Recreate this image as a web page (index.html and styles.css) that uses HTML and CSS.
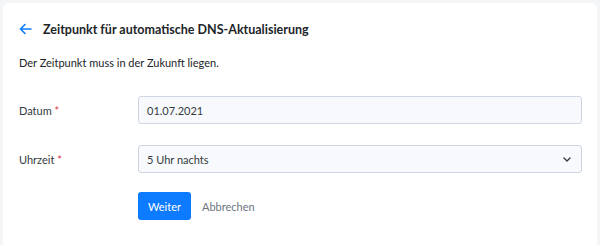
FILE: index.html
```html
<!DOCTYPE html>
<html lang="de">
<head>
  <meta charset="UTF-8">
  <title>Zeitpunkt</title>
  <link rel="stylesheet" href="styles.css">
</head>
<body>
  <div class="card">
    <div class="card-header">
      <a class="back" href="#">
        <svg width="13" height="12" viewBox="0 0 13 12" fill="none" stroke="#0d7bff" stroke-width="1.6" stroke-linecap="round" stroke-linejoin="round">
          <path d="M12 6H1.5M6 1.5L1.5 6L6 10.5"/>
        </svg>
      </a>
      <h1>Zeitpunkt für automatische DNS-Aktualisierung</h1>
    </div>
    <p class="hint">Der Zeitpunkt muss in der Zukunft liegen.</p>

    <div class="form">
      <div class="row">
        <label>Datum <span class="req">*</span></label>
        <div class="field">01.07.2021</div>
      </div>
      <div class="row">
        <label>Uhrzeit <span class="req">*</span></label>
        <div class="field select">
          <span>5 Uhr nachts</span>
          <svg width="8" height="5" viewBox="0 0 8 5" fill="none" stroke="#343a40" stroke-width="1.4" stroke-linecap="round" stroke-linejoin="round">
            <path d="M1 1l3 3 3-3"/>
          </svg>
        </div>
      </div>
      <div class="actions">
        <button class="btn-primary">Weiter</button>
        <a class="btn-link" href="#">Abbrechen</a>
      </div>
    </div>
  </div>
</body>
</html>
```

FILE: styles.css
```css
body {
  margin: 0;
  padding: 3px 3px 0 3px;
  background: #f4f5f7;
  font-family: 'Lato', 'Noto Sans', sans-serif;
  font-size: 11px;
  color: #212529;
}

.card {
  background: #ffffff;
  border-radius: 6px 6px 0 0;
  padding: 16px 15px 0 16px;
  height: 242px;
  box-sizing: border-box;
}

.card-header {
  display: flex;
  align-items: center;
  gap: 11px;
  height: 20px;
}

.back {
  display: flex;
  align-items: center;
}

h1 {
  margin: 0;
  font-size: 12.5px;
  font-weight: 700;
  color: #212529;
}

.hint {
  margin: 15px 0 0 0;
  line-height: 18px;
  color: #212529;
}

.form {
  margin-top: 24px;
  display: flex;
  flex-direction: column;
  gap: 21px;
}

.row {
  display: flex;
  align-items: center;
}

.row label {
  width: 119px;
  color: #343a40;
}

.req {
  color: #dc3545;
}

.field {
  flex: 1;
  height: 28px;
  box-sizing: border-box;
  border: 1px solid #cdd5e2;
  border-radius: 3px;
  background: #f7f9fc;
  padding: 0 8px;
  display: flex;
  align-items: center;
  color: #343a40;
}

.select {
  justify-content: space-between;
  padding-right: 10px;
}

.actions {
  display: flex;
  align-items: center;
  gap: 11px;
  margin-left: 119px;
  margin-top: -2px;
}

.btn-primary {
  height: 28px;
  padding: 0 10px;
  border: none;
  border-radius: 3px;
  background: #0d7bff;
  color: #ffffff;
  font-family: inherit;
  font-size: 11px;
}

.btn-link {
  color: #6c757d;
  text-decoration: none;
}
```
